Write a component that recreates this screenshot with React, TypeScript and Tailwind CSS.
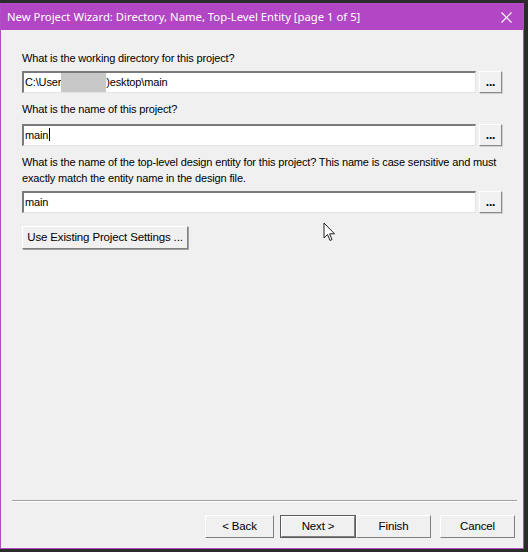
import React from "react";

const font = { fontFamily: '"Liberation Sans", Arial, sans-serif' };

function Field({ children }: { children?: React.ReactNode }) {
  return (
    <div className="flex items-start gap-[3px]">
      <div className="relative h-[22px] w-[454px] border-t-2 border-l-2 border-t-[#7a7a7a] border-l-[#7a7a7a] border-b border-r border-b-[#e3e3e3] border-r-[#e3e3e3] bg-white pl-[1px] text-[11px] leading-[19px] tracking-[-0.15px] text-black">
        {children}
      </div>
      <button className="h-[22px] w-[23px] border border-t-white border-l-white border-b-[#8a8a8a] border-r-[#8a8a8a] bg-[#f0f0f0] text-[12px] font-bold leading-[16px] text-black shadow-[1px_1px_0_#d0d0d0]">
        ...
      </button>
    </div>
  );
}

function Btn({ label, def, w }: { label: string; def?: boolean; w: string }) {
  return (
    <div className={`${w} h-[23px] ${def ? "border border-[#5a5a5a]" : ""}`}>
      <div className="flex h-full w-full items-center justify-center whitespace-nowrap border border-t-white border-l-white border-b-[#808080] border-r-[#808080] bg-[#f0f0f0] text-[11.5px] tracking-[-0.15px] text-black">
        {label}
      </div>
    </div>
  );
}

export default function App() {
  return (
    <div className="h-[552px] w-[528px] overflow-hidden bg-[#2b2b2b]" style={font}>
      <div className="mt-[3px] flex h-[546px] w-[524px] flex-col border border-[#b34dc6] bg-[#f0f0f0]">
        <div className="flex h-[26px] shrink-0 items-center justify-between bg-[#b346c4] pl-[6px] pr-[11px] text-white">
          <span className="text-[11.3px]" style={{ fontFamily: '"Noto Sans", "Open Sans", sans-serif' }}>
            New Project Wizard: Directory, Name, Top-Level Entity [page 1 of 5]
          </span>
          <svg width="11" height="11" viewBox="0 0 11 11">
            <path d="M0.5 0.5 L10.5 10.5 M10.5 0.5 L0.5 10.5" stroke="white" strokeWidth="1.2" />
          </svg>
        </div>
        <div className="relative flex flex-1 flex-col pl-[21px] pt-[20px] text-[11px] tracking-[-0.15px] text-black">
          <div className="whitespace-nowrap leading-[16px]">What is the working directory for this project?</div>
          <div className="mt-[5px]">
            <Field>
              <span className="relative">
                C:\User
                <span className="inline-block h-[19px] w-[45px] bg-[#c8c8c8] align-top" />
                )esktop\main
              </span>
            </Field>
          </div>
          <div className="mt-[8px] whitespace-nowrap leading-[16px]">What is the name of this project?</div>
          <div className="mt-[7px]">
            <Field>
              main<span className="ml-[1px] inline-block h-[13px] w-[1px] bg-black align-[-2px]" />
            </Field>
          </div>
          <div className="mt-[8px] whitespace-nowrap leading-[16px]">
            What is the name of the top-level design entity for this project? This name is case sensitive and must
            <br />
            exactly match the entity name in the design file.
          </div>
          <div className="mt-[5px]">
            <Field>main</Field>
          </div>
          <div className="mt-[13px]">
            <div className="flex h-[23px] w-[166px] items-center justify-center whitespace-nowrap border border-t-white border-l-white border-b-[#808080] border-r-[#808080] text-[11.5px] shadow-[1px_1px_0_#a0a0a0]">
              Use Existing Project Settings ...
            </div>
          </div>
          <svg className="absolute left-[322px] top-[192px]" width="13" height="20" viewBox="0 0 13 20">
            <path d="M1 1 L1 16 L4.5 12.5 L7 18.5 L9 17.6 L6.6 11.8 L11.5 11.8 Z" fill="white" stroke="#222" strokeWidth="1" strokeLinejoin="round" />
          </svg>
          <div className="flex-1" />
          <div className="mr-[6px] ml-[-10px] h-[2px] border-t border-t-[#a0a0a0] border-b border-b-white" />
          <div className="mt-[13px] mb-[10px] flex justify-end pr-[8px]">
            <div className="mr-[6px]">
              <Btn label="< Back" w="w-[69px]" />
            </div>
            <Btn label="Next >" def w="w-[76px]" />
            <Btn label="Finish" w="w-[75px]" />
            <div className="ml-[9px]">
              <Btn label="Cancel" w="w-[75px]" />
            </div>
          </div>
        </div>
      </div>
    </div>
  );
}
